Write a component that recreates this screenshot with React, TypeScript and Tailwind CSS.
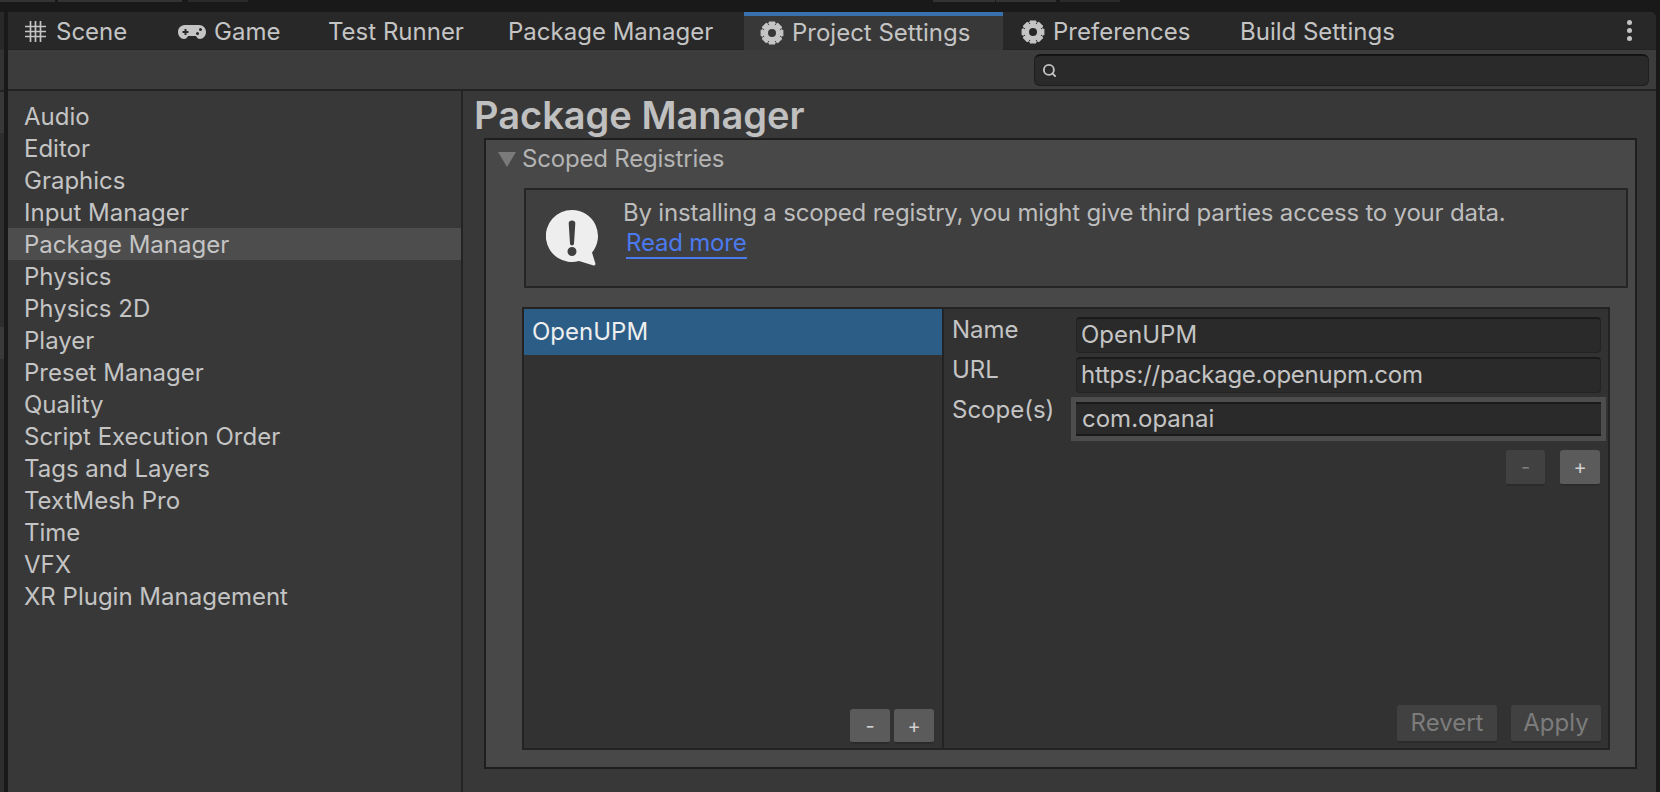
import type { ReactNode } from 'react';
import { Search } from 'lucide-react';

const SETTINGS = [
  'Audio',
  'Editor',
  'Graphics',
  'Input Manager',
  'Package Manager',
  'Physics',
  'Physics 2D',
  'Player',
  'Preset Manager',
  'Quality',
  'Script Execution Order',
  'Tags and Layers',
  'TextMesh Pro',
  'Time',
  'VFX',
  'XR Plugin Management',
];

// 8 teeth around a centre hole
function gearPath() {
  const pts: string[] = [];
  for (let i = 0; i < 8; i++) {
    const a = (i * Math.PI) / 4;
    [
      [-0.5, 8.8],
      [-0.26, 11.8],
      [0.26, 11.8],
      [0.5, 8.8],
    ].forEach(([off, r]) => {
      const x = 12 + r * Math.sin(a + off);
      const y = 12 - r * Math.cos(a + off);
      pts.push(`${x.toFixed(2)} ${y.toFixed(2)}`);
    });
  }
  return `M${pts.join('L')}ZM12 8a4 4 0 1 0 0 8a4 4 0 0 0 0-8Z`;
}

function GearIcon() {
  return (
    <svg width="24" height="24" viewBox="0 0 24 24" className="shrink-0">
      <path fill="#c4c4c4" fillRule="evenodd" d={gearPath()} />
    </svg>
  );
}

function GridIcon() {
  return (
    <svg width="21" height="21" viewBox="0 0 21 21" className="shrink-0" stroke="#c4c4c4" strokeWidth="1.7">
      <path d="M5.500 0v21M10.500 0v21M15.500 0v21M0 5.500h21M0 10.500h21M0 15.500h21" />
    </svg>
  );
}

function GamepadIcon() {
  return (
    <svg width="28" height="16" viewBox="0 0 28 16" className="shrink-0">
      <path
        fill="#c4c4c4"
        fillRule="evenodd"
        d="M7 1h14c4 0 7 3 7 7s-3 7-6 7c-2 0-3-1-4-3h-8c-1 2-2 3-4 3-3 0-6-3-6-7s3-7 7-7zM6.500 5v2H4.500v2h2v2h2V9h2V7h-2V5h-2zM22.500 4a1.500 1.500 0 1 0 0 3 1.500 1.500 0 0 0 0-3zM19.500 8a1.500 1.500 0 1 0 0 3 1.500 1.500 0 0 0 0-3z"
      />
    </svg>
  );
}

function InfoBubble() {
  return (
    <svg width="52" height="56" viewBox="0 0 52 56" className="shrink-0">
      <path
        fill="#eeeeee"
        fillRule="evenodd"
        d="M26 0a26 26 0 0 1 20 42.600l3.400 10.800q.4 2.200-1.800 2.200L33 51a26 26 0 1 1-7-51zM26 10.500c-2.200 0-3.400 1.300-3.300 3l1.300 20c.1 1.200 .8 2 2 2s1.900-.8 2-2l1.300-20c.1-1.700-1.100-3-3.300-3zm0 26.500a4.500 4.500 0 1 0 0 9 4.500 4.500 0 0 0 0-9z"
      />
    </svg>
  );
}

function TabLabel({ label, icon, className }: { label: string; icon?: ReactNode; className?: string }) {
  return (
    <div className={`flex h-[37px] shrink-0 items-center gap-[8px] pt-[2px] ${className ?? ''}`}>
      {icon}
      <span>{label}</span>
    </div>
  );
}

function SmallButton({ label, dim, className }: { label: string; dim?: boolean; className: string }) {
  return (
    <div
      className={`flex items-center justify-center rounded-[3px] border-b-2 border-[#2b2b2b] ${
        dim ? 'bg-[#414141] text-[#7c7c7c]' : 'bg-[#5b5b5b] text-[#d0d0d0]'
      } ${className}`}
    >
      {label}
    </div>
  );
}

function TextField({ value, focused, className }: { value: string; focused?: boolean; className?: string }) {
  return (
    <div
      className={
        focused
          ? 'h-[44px] border-[5px] border-[#4d4d4d] bg-[#2a2a2a]'
          : 'mx-[5px] h-[36px] rounded-[4px] border border-t-2 border-[#232323] border-t-[#1a1a1a] bg-[#2a2a2a]'
      }
    >
      <div
        className={`flex h-full items-center ${focused ? 'border-y-2 border-[#1a1a1a] px-[6px]' : 'px-[4px] pb-px'} ${className ?? ''}`}
      >
        {value}
      </div>
    </div>
  );
}

export default function App() {
  return (
    <div
      className="flex h-[792px] w-[1660px] flex-col overflow-hidden bg-[#191919] text-[24px] leading-none text-[#c4c4c4]"
      style={{ fontFamily: 'Inter, "Liberation Sans", sans-serif' }}
    >
      {/* Strip of the window behind */}
      <div className="flex h-[12px] shrink-0 items-start">
        <div className="h-[2px] w-[55px] bg-[#333333]" />
        <div className="ml-[3px] h-[2px] w-[124px] bg-[#333333]" />
        <div className="ml-[6px] h-[2px] w-[60px] bg-[#2a2a2a]" />
        <div className="ml-[685px] h-[2px] w-[62px] bg-[#333333]" />
        <div className="ml-px h-[2px] w-[60px] bg-[#333333]" />
        <div className="ml-[4px] h-[2px] w-[60px] bg-[#2a2a2a]" />
      </div>

      <div className="flex min-h-0 flex-1 pr-[4px]">
        {/* Edge of the neighbouring panel */}
        <div className="flex w-[8px] shrink-0 flex-col">
          <div className="flex h-full w-[4px] flex-col bg-[#2e2e2e]">
            <div className="h-[38px] rounded-r-[4px] bg-[#282828]" />
            <div className="h-[40px] bg-[#333333]" />
            <div className="h-[2px] bg-[#232323]" />
            <div className="h-[41px] bg-[#383838]" />
            <div className="mt-[194px] h-[32px] bg-[#3a3a3a]" />
          </div>
        </div>

        <div className="flex min-w-0 flex-1 flex-col rounded-tr-[6px] bg-[#383838]">
          {/* Tabs */}
          <div className="flex h-[38px] shrink-0 items-start rounded-tr-[6px] border-b border-[#232323] bg-[#282828] pr-[24px]">
            <TabLabel label="Scene" icon={<GridIcon />} className="ml-[17px] w-[151px] gap-[10px]" />
            <TabLabel label="Game" icon={<GamepadIcon />} className="ml-[2px] w-[149px] gap-[4px]" />
            <TabLabel label="Test Runner" className="ml-px w-[180px]" />
            <TabLabel label="Package Manager" className="w-[236px]" />
            <div className="h-[38px] w-[259px] shrink-0 border-t-[4px] border-[#3a72b0] bg-[#383838]">
              <TabLabel label="Project Settings" icon={<GearIcon />} className="!h-[33px] !pt-0 pl-[16px]" />
            </div>
            <TabLabel label="Preferences" icon={<GearIcon />} className="w-[237px] pl-[18px]" />
            <TabLabel label="Build Settings" />
            <div className="ml-auto flex h-[37px] flex-col items-center justify-center gap-[3px]">
              <div className="size-[5px] rounded-full bg-[#c4c4c4]" />
              <div className="size-[5px] rounded-full bg-[#c4c4c4]" />
              <div className="size-[5px] rounded-full bg-[#c4c4c4]" />
            </div>
          </div>

          {/* Toolbar */}
          <div className="flex h-[41px] shrink-0 items-center justify-end border-b-2 border-[#232323] bg-[#3c3c3c] pr-[7px]">
            <div className="flex h-[32px] w-[615px] items-center rounded-[6px] border border-t-2 border-[#1e1e1e] border-t-[#141414] bg-[#2a2a2a] pl-[7px]">
              <Search size={15} strokeWidth={3} className="text-[#c4c4c4]" />
            </div>
          </div>

          <div className="flex min-h-0 flex-1">
            {/* Settings list */}
            <div className="w-[455px] shrink-0 border-r-2 border-[#232323] bg-[#383838] pt-[9px]">
              {SETTINGS.map((name) => (
                <div
                  key={name}
                  className={`flex h-[32px] items-center pt-[2px] pl-[16px] ${
                    name === 'Package Manager' ? 'bg-[#4d4d4d]' : ''
                  }`}
                >
                  {name}
                </div>
              ))}
            </div>

            {/* Package Manager settings */}
            <div className="flex min-w-0 flex-1 flex-col pr-[19px] pl-[11px]">
              <h1 className="flex h-[47px] items-center text-[38px] font-semibold text-[#c0c0c0]">Package Manager</h1>
              <div className="ml-[10px] flex h-[631px] flex-col border-2 border-[#1e1e1e] bg-[#484848] pr-[7px] pl-[10px]">
                <div className="flex h-[38px] shrink-0 items-center gap-[6px] pl-[2px] tracking-[-0.2px] text-[#b4b4b4]">
                  <div className="h-0 w-0 border-x-[9px] border-t-[15px] border-x-transparent border-t-[#7a7a7a]" />
                  <span>Scoped Registries</span>
                </div>

                <div className="mt-[10px] ml-[28px] flex h-[100px] shrink-0 items-start border-2 border-[#252525] bg-[#3f3f3f] pt-[20px] pl-[20px]">
                  <InfoBubble />
                  <div className="-mt-[13px] ml-[25px] tracking-[-0.2px] text-[#bdbdbd]">
                    <div className="h-[32px] leading-[31px]">
                      By installing a scoped registry, you might give third parties access to your data.
                    </div>
                    <div className="ml-[3px] w-fit border-b-2 border-[#4b79ee] leading-[28px] text-[#4b79ee]">
                      Read more
                    </div>
                  </div>
                </div>

                <div className="mt-[19px] mr-[18px] ml-[26px] flex min-h-0 flex-1 border-2 border-[#232323] bg-[#323232]">
                  <div className="flex w-[420px] shrink-0 flex-col border-r-2 border-[#232323]">
                    <div className="flex h-[46px] items-center bg-[#2c5d87] pl-[8px] text-[#eeeeee]">OpenUPM</div>
                    <div className="mt-auto mb-[4px] flex justify-end gap-[4px] pr-[8px]">
                      <SmallButton label="-" className="h-[35px] w-[40px] text-[20px]" />
                      <SmallButton label="+" className="h-[35px] w-[40px] text-[20px]" />
                    </div>
                  </div>

                  <div className="flex min-w-0 flex-1 flex-col">
                    <div className="grid grid-cols-[119px_1fr] gap-y-[4px] pt-[8px] pr-[2px] pl-[8px]">
                      <div className="h-[36px] leading-[26px]">Name</div>
                      <TextField value="OpenUPM" />
                      <div className="h-[36px] leading-[25px]">URL</div>
                      <TextField value="https://package.openupm.com" className="tracking-[-0.25px]" />
                      <div className="h-[44px] leading-[26px]">Scope(s)</div>
                      <TextField value="com.opanai" focused />
                    </div>
                    <div className="mt-[9px] flex justify-end gap-[15px] pr-[8px]">
                      <SmallButton label="-" dim className="h-[36px] w-[39px] text-[20px]" />
                      <SmallButton label="+" className="h-[36px] w-[40px] text-[20px]" />
                    </div>
                    <div className="mt-auto mb-[5px] flex justify-end gap-[14px] pr-[7px]">
                      <SmallButton label="Revert" dim className="h-[38px] w-[100px]" />
                      <SmallButton label="Apply" dim className="h-[38px] w-[90px]" />
                    </div>
                  </div>
                </div>
                <div className="h-[17px] shrink-0" />
              </div>
            </div>
          </div>
        </div>
      </div>
    </div>
  );
}
